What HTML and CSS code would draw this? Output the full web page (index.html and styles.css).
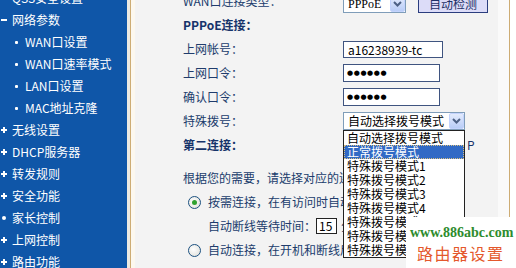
FILE: index.html
```html
<!DOCTYPE html>
<html lang="zh-CN">
<head>
<meta charset="utf-8">
<title>网络参数 - WAN口设置</title>
<link rel="stylesheet" href="styles.css">
</head>
<body>
<div class="page">
  <nav class="sidebar">
    <div class="sb-item top"><span class="ico"><span class="bdot"></span></span>QSS安全设置</div>
    <div class="sb-item top"><span class="ico"><svg width="6" height="2" viewBox="0 0 6 2"><rect width="6" height="2" fill="#fff"/></svg></span>网络参数</div>
    <div class="sb-item sub"><span class="ico"><span class="sdot"></span></span>WAN口设置</div>
    <div class="sb-item sub"><span class="ico"><span class="sdot"></span></span>WAN口速率模式</div>
    <div class="sb-item sub"><span class="ico"><span class="sdot"></span></span>LAN口设置</div>
    <div class="sb-item sub"><span class="ico"><span class="sdot"></span></span>MAC地址克隆</div>
    <div class="sb-item top"><span class="ico"><svg width="6" height="6" viewBox="0 0 6 6"><path d="M3 0v6M0 3h6" stroke="#fff" stroke-width="2"/></svg></span>无线设置</div>
    <div class="sb-item top"><span class="ico"><svg width="6" height="6" viewBox="0 0 6 6"><path d="M3 0v6M0 3h6" stroke="#fff" stroke-width="2"/></svg></span>DHCP服务器</div>
    <div class="sb-item top"><span class="ico"><svg width="6" height="6" viewBox="0 0 6 6"><path d="M3 0v6M0 3h6" stroke="#fff" stroke-width="2"/></svg></span>转发规则</div>
    <div class="sb-item top"><span class="ico"><svg width="6" height="6" viewBox="0 0 6 6"><path d="M3 0v6M0 3h6" stroke="#fff" stroke-width="2"/></svg></span>安全功能</div>
    <div class="sb-item top"><span class="ico"><span class="bdot"></span></span>家长控制</div>
    <div class="sb-item top"><span class="ico"><svg width="6" height="6" viewBox="0 0 6 6"><path d="M3 0v6M0 3h6" stroke="#fff" stroke-width="2"/></svg></span>上网控制</div>
    <div class="sb-item top"><span class="ico"><svg width="6" height="6" viewBox="0 0 6 6"><path d="M3 0v6M0 3h6" stroke="#fff" stroke-width="2"/></svg></span>路由功能</div>
  </nav>
  <div class="edge-gap"></div>
  <div class="edge-line"></div>
  <div class="edge-cream"></div>
  <main class="content">
    <div class="row">
      <div class="label">WAN口连接类型：</div>
      <div class="val val-wan">
        <div class="sel sel-type"><span class="sel-text lat">PPPoE</span><span class="arrow"><svg width="9" height="6" viewBox="0 0 9 6"><path d="M1 1l3.5 3.5L8 1" fill="none" stroke="#4d6185" stroke-width="2"/></svg></span></div>
        <div class="btn">自动检测</div>
      </div>
    </div>
    <div class="row"><div class="label bold">PPPoE连接：</div></div>
    <div class="row">
      <div class="label">上网帐号：</div>
      <div class="val"><div class="field field-user">a16238939-tc</div></div>
    </div>
    <div class="row">
      <div class="label">上网口令：</div>
      <div class="val"><div class="field field-pw"><span class="dots">●●●●●●</span></div></div>
    </div>
    <div class="row">
      <div class="label">确认口令：</div>
      <div class="val"><div class="field field-pw"><span class="dots">●●●●●●</span></div></div>
    </div>
    <div class="row">
      <div class="label">特殊拨号：</div>
      <div class="val">
        <div class="sel-wrap">
          <div class="sel sel-dial"><span class="sel-text">自动选择拨号模式</span><span class="arrow"><svg width="9" height="6" viewBox="0 0 9 6"><path d="M1 1l3.5 3.5L8 1" fill="none" stroke="#4d6185" stroke-width="2"/></svg></span></div>
          <div class="dd">
            <div class="dd-item">自动选择拨号模式</div>
            <div class="dd-item active">正常拨号模式</div>
            <div class="dd-item">特殊拨号模式1</div>
            <div class="dd-item">特殊拨号模式2</div>
            <div class="dd-item">特殊拨号模式3</div>
            <div class="dd-item">特殊拨号模式4</div>
            <div class="dd-item">特殊拨号模式5</div>
            <div class="dd-item">特殊拨号模式6</div>
            <div class="dd-item">特殊拨号模式7</div>
          </div>
        </div>
      </div>
    </div>
    <div class="row">
      <div class="label bold">第二连接：</div>
      <div class="val"><span class="second-opt">P</span></div>
    </div>
    <div class="row para clip">根据您的需要，请选择对应的连接模式：</div>
    <div class="row radio-row clip"><span class="radio checked"></span>按需连接，在有访问时自动连接</div>
    <div class="row wait-row clip">自动断线等待时间：<span class="field field-min">15</span>分钟</div>
    <div class="row radio-row clip"><span class="radio"></span>自动连接，在开机和断线后自动连接</div>
  </main>
  <div class="right-pad"></div>
  <div class="edge-line"></div>
  <div class="right-white"></div>
</div>
<div class="watermark">
  <div class="wm-url">www.886abc.com</div>
  <div class="wm-title">路由器设置</div>
</div>
</body>
</html>
```

FILE: styles.css
```css
html, body {
  margin: 0;
  padding: 0;
}
body {
  width: 516px;
  height: 268px;
  overflow: hidden;
  position: relative;
  font-family: "Noto Sans CJK SC", "Liberation Sans", sans-serif;
  font-size: 12px;
}
.page {
  display: flex;
  width: 516px;
  height: 268px;
  overflow: hidden;
}

/* sidebar */
.sidebar {
  flex: none;
  width: 127px;
  background: #0f56a8;
  margin-top: -13px;
}
.sb-item {
  height: 22px;
  display: flex;
  align-items: center;
  color: #fff;
  font-size: 12px;
  white-space: nowrap;
  line-height: 22px;
}
.sb-item.top { padding-left: 1px; }
.sb-item.sub { padding-left: 15px; }
.ico {
  display: flex;
  align-items: center;
  flex: none;
}
.sb-item.top .ico { width: 11px; }
.sb-item.sub .ico { width: 10px; }
.ico svg { display: block; }
.sdot {
  display: block;
  width: 3px;
  height: 3px;
  background: #fff;
  border-radius: 1px;
}
.bdot {
  display: block;
  width: 4px;
  height: 4px;
  margin-left: 1px;
  background: #fff;
  border-radius: 2px;
}

/* frame edges */
.edge-gap { flex: none; width: 3px; background: #eceae2; }
.edge-line { flex: none; width: 1px; background: #cdac74; }
.edge-cream { flex: none; width: 4px; background: #fcf8ef; }
.right-pad { flex: none; width: 11px; background: #fafafa; }
.right-white { flex: none; width: 6px; background: #fff; }

/* content */
.content {
  flex: none;
  width: 363px;
  box-sizing: border-box;
  background: #f3f3f3;
  padding-left: 48px;
  margin-top: -11px;
  color: #203c6c;
  white-space: nowrap;
}
.row {
  display: flex;
  align-items: center;
  height: 24px;
  line-height: 24px;
}
.clip {
  width: 160px;
  box-sizing: border-box;
  overflow: hidden;
}
.label {
  flex: none;
  width: 160px;
}
.bold {
  font-weight: 700;
  color: #16336a;
}
.val {
  display: flex;
  align-items: center;
}
.val-wan { padding-top: 6px; }

.sel {
  display: flex;
  align-items: center;
  justify-content: space-between;
  box-sizing: border-box;
  height: 18px;
  background: #fff;
  border: 1px solid #7f9db9;
  color: #000;
  line-height: 16px;
}
.sel-text { padding-left: 4px; }
.lat { font-family: "Liberation Serif", serif; font-size: 12px; }
.sel-type { width: 63px; }
.sel-dial { width: 122px; }
.arrow {
  display: flex;
  align-items: center;
  justify-content: center;
  box-sizing: border-box;
  width: 15px;
  height: 16px;
  background: linear-gradient(#e3ebfd, #b9cdf7);
  border: 1px solid #c3d3fd;
  border-radius: 2px;
}
.arrow svg { display: block; }

.btn {
  margin-left: 12px;
  box-sizing: border-box;
  width: 70px;
  height: 18px;
  line-height: 16px;
  text-align: center;
  background: #dcdcf8;
  border: 1px solid #2b3d7e;
  color: #1d2f66;
}

.field {
  box-sizing: border-box;
  background: #fff;
  border: 1px solid #3f5480;
  color: #000;
}
.field-user {
  width: 100px;
  height: 17px;
  line-height: 15px;
  padding-left: 4px;
}
.field-pw {
  width: 97px;
  height: 18px;
  line-height: 16px;
  padding-left: 3px;
  display: flex;
  align-items: center;
}
.dots {
  font-family: "DejaVu Sans", sans-serif;
  font-size: 7px;
  letter-spacing: 0.6px;
  line-height: 16px;
}

.sel-wrap { position: relative; }
.dd {
  position: absolute;
  top: 100%;
  left: 0;
  z-index: 2;
  width: 122px;
  box-sizing: border-box;
  background: #fff;
  border: 1px solid #222;
}
.dd-item {
  height: 14px;
  line-height: 14px;
  padding-left: 3px;
  color: #000;
  font-size: 12px;
}
.dd-item.active {
  background: #316ac5;
  color: #fff;
  outline: 1px dotted #d8c080;
  outline-offset: -1px;
}

.second-opt {
  margin-left: 124px;
  color: #16336a;
}

.para { margin-top: 9px; }
.radio-row { padding-left: 5px; }
.radio {
  flex: none;
  position: relative;
  box-sizing: border-box;
  width: 13px;
  height: 13px;
  margin-right: 7px;
  border: 1px solid #1c5180;
  border-radius: 50%;
  background: radial-gradient(circle at 40% 40%, #fff, #dcdcd6);
}
.radio.checked::after {
  content: "";
  position: absolute;
  left: 3px;
  top: 3px;
  width: 5px;
  height: 5px;
  border-radius: 50%;
  background: #2fa12f;
}
.wait-row { padding-left: 25px; }
.field-min {
  display: inline-block;
  flex: none;
  width: 21px;
  height: 16px;
  line-height: 14px;
  padding-left: 2px;
  margin-right: 4px;
  border-color: #222;
}

/* watermark */
.watermark {
  position: absolute;
  left: 406px;
  top: 217px;
  width: 110px;
  height: 51px;
  z-index: 3;
  background: #fff;
}
.wm-url {
  margin-top: 8px;
  padding-left: 4px;
  height: 16px;
  line-height: 16px;
  font-family: "Liberation Serif", serif;
  font-weight: 700;
  font-size: 14px;
  color: #2e8c2e;
  white-space: nowrap;
}
.wm-title {
  margin-top: 3px;
  padding-left: 11px;
  height: 18px;
  line-height: 18px;
  font-size: 16px;
  letter-spacing: 1.5px;
  color: #e4582c;
  white-space: nowrap;
}
```
